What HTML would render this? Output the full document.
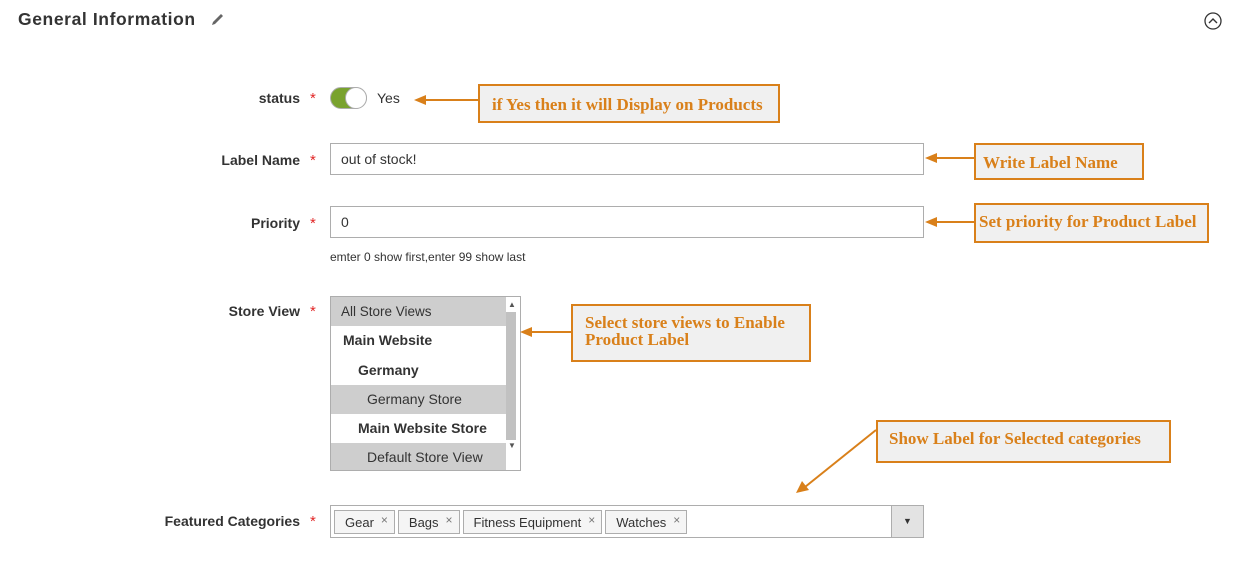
<!DOCTYPE html>
<html><head><style>
body{margin:0;width:1245px;height:565px;background:#fff;position:relative;font-family:"Liberation Sans",sans-serif;color:#333;overflow:hidden}
.a{position:absolute}
.lbl{position:absolute;right:945px;font-size:14px;font-weight:bold;color:#333;text-align:right}
.st{position:absolute;left:310px;color:#e22626;font-size:15px}
.inp{position:absolute;left:330px;width:594px;height:32px;border:1px solid #adadad;font-size:14px;line-height:31px;padding-left:10px;box-sizing:border-box}
.note{position:absolute;border:2px solid #d9801a;background:#f0f0f0;color:#d9801a;font-family:"Liberation Serif",serif;font-weight:bold;font-size:17px;box-sizing:border-box;padding:6px 12px;line-height:17px;white-space:nowrap}
.opt{height:29.3px;line-height:29px;font-size:14px}
.tag{display:inline-block;border:1px solid #adadad;background:#f5f5f5;font-size:13px;height:24px;line-height:23px;padding:0 20px 0 10px;margin-right:3px;position:relative;box-sizing:border-box}
.tag:after{content:"×";position:absolute;right:6px;top:-2px;color:#777;font-size:12px}
</style></head><body>
<div class="a" style="left:18px;top:9px;font-size:17.5px;font-weight:bold;color:#333;letter-spacing:0.6px">General Information</div>
<svg class="a" style="left:210px;top:13px" width="16" height="14" viewBox="0 0 16 14"><path d="M2 12 L3 9 L11 1 L13 3 L5 11 Z" fill="#666"/></svg>
<svg class="a" style="left:1203px;top:11px" width="20" height="20"><circle cx="10" cy="10" r="8" fill="none" stroke="#333" stroke-width="1.3"/><path d="M6 12 L10 8 L14 12" fill="none" stroke="#333" stroke-width="1.4"/></svg>

<div class="lbl" style="top:90px">status</div><div class="st" style="top:90px">*</div>
<div class="a" style="left:330px;top:87px;width:37px;height:22px;border-radius:11px;background:#79a22e;border:1px solid #adadad;box-sizing:border-box"></div>
<div class="a" style="left:345px;top:87px;width:22px;height:22px;border-radius:50%;background:#fff;border:1px solid #adadad;box-sizing:border-box"></div>
<div class="a" style="left:377px;top:90px;font-size:14px">Yes</div>

<div class="lbl" style="top:152px">Label Name</div><div class="st" style="top:152px">*</div>
<div class="inp" style="top:143px">out of stock!</div>
<div class="lbl" style="top:215px">Priority</div><div class="st" style="top:215px">*</div>
<div class="inp" style="top:206px">0</div>
<div class="a" style="left:330px;top:250px;font-size:12px">emter 0 show first,enter 99 show last</div>

<div class="lbl" style="top:303px">Store View</div><div class="st" style="top:303px">*</div>
<div class="a" style="left:330px;top:296px;width:191px;height:175px;border:1px solid #adadad;box-sizing:border-box;overflow:hidden">
 <div style="width:175px">
  <div class="opt" style="background:#cecece;padding-left:10px;font-size:13.5px">All Store Views</div>
  <div class="opt" style="padding-left:12px;font-weight:bold">Main Website</div>
  <div class="opt" style="padding-left:27px;font-weight:bold">Germany</div>
  <div class="opt" style="background:#cecece;padding-left:36px">Germany Store</div>
  <div class="opt" style="padding-left:27px;font-weight:bold">Main Website Store</div>
  <div class="opt" style="background:#cecece;padding-left:36px">Default Store View</div>
 </div>
 <div class="a" style="left:175px;top:15px;width:10px;height:128px;background:#c1c1c1"></div>
 <div class="a" style="left:177px;top:3px;font-size:8px;color:#555">▲</div>
 <div class="a" style="left:177px;top:144px;font-size:8px;color:#555">▼</div>
</div>

<div class="lbl" style="top:513px">Featured Categories</div><div class="st" style="top:513px">*</div>
<div class="a" style="left:330px;top:505px;width:594px;height:33px;border:1px solid #adadad;box-sizing:border-box;padding:4px 0 0 3px">
 <span class="tag">Gear</span><span class="tag">Bags</span><span class="tag">Fitness Equipment</span><span class="tag">Watches</span>
 <div class="a" style="right:0;top:0;width:31px;height:31px;background:#e3e3e3;border-left:1px solid #adadad;text-align:center;line-height:31px;font-size:9px">▼</div>
</div>

<div class="note" style="left:478px;top:84px;width:302px;height:39px;padding-top:10px">if Yes then it will Display on Products</div>
<div class="note" style="left:974px;top:143px;width:170px;height:37px;padding:9px 7px">Write Label Name</div>
<div class="note" style="left:974px;top:203px;width:235px;height:40px;padding:8px 3px">Set priority for Product Label</div>
<div class="note" style="left:571px;top:304px;width:240px;height:58px;padding:8px 12px;white-space:normal">Select store views to Enable Product Label</div>
<div class="note" style="left:876px;top:420px;width:295px;height:43px;padding:8px 11px">Show Label for Selected categories</div>

<svg class="a" style="left:0;top:0" width="1245" height="565">
<g stroke="#d9801a" stroke-width="2" fill="#d9801a">
<line x1="478" y1="100" x2="424" y2="100"/><path d="M414 100 L426 95 L426 105Z" stroke="none"/>
<line x1="974" y1="158" x2="935" y2="158"/><path d="M925 158 L937 153 L937 163Z" stroke="none"/>
<line x1="974" y1="222" x2="935" y2="222"/><path d="M925 222 L937 217 L937 227Z" stroke="none"/>
<line x1="571" y1="332" x2="530" y2="332"/><path d="M520 332 L532 327 L532 337Z" stroke="none"/>
<line x1="876" y1="430" x2="805" y2="487"/><path d="M796 493 L802 481 L809 490Z" stroke="none"/>
</g></svg>
</body></html>
